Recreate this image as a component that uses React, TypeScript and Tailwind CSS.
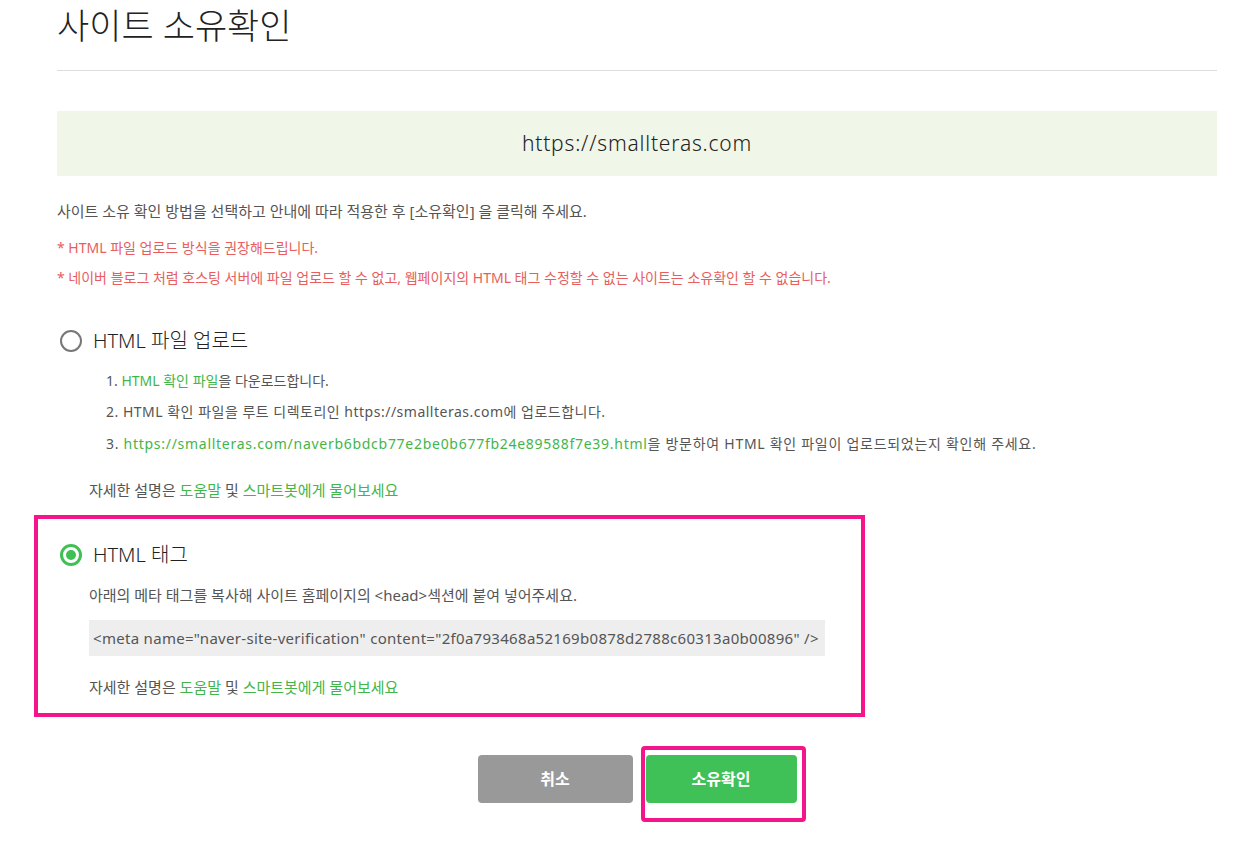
const font = { fontFamily: '"Noto Sans", "Noto Sans CJK KR", sans-serif' };

function Radio({ checked }: { checked?: boolean }) {
  return checked ? (
    <span className="flex h-[22px] w-[22px] items-center justify-center rounded-full border-[3px] border-[#3fc055]">
      <span className="h-[10px] w-[10px] rounded-full bg-[#3fc055]" />
    </span>
  ) : (
    <span className="h-[22px] w-[22px] rounded-full border-2 border-[#777]" />
  );
}

function Help() {
  return (
    <p className="text-[15px] leading-5 text-[#555]">
      자세한 설명은 <span className="text-[#43b549]">도움말</span> 및{" "}
      <span className="text-[#43b549]">스마트봇에게 물어보세요</span>
    </p>
  );
}

export default function App() {
  return (
    <div style={font} className="min-h-[841px] bg-white">
      <div className="mx-[57px] w-[1160px]">
        <h1 className="border-b border-[#ddd] pt-[6px] pb-6 text-[35px] leading-10 font-light text-[#222]">
          사이트 소유확인
        </h1>

        <div className="mt-10 flex h-[65px] items-center justify-center bg-[#f0f6e8] text-[21px] font-light tracking-[0.8px] text-[#222]">
          https://smallteras.com
        </div>

        <p className="mt-[25px] text-[15px] leading-5 text-[#555]">
          사이트 소유 확인 방법을 선택하고 안내에 따라 적용한 후 [소유확인] 을 클릭해 주세요.
        </p>
        <p className="mt-[17px] text-[14px] leading-5 text-[#e85d5d]">* HTML 파일 업로드 방식을 권장해드립니다.</p>
        <p className="mt-[10px] text-[14px] leading-5 text-[#e85d5d]">
          * 네이버 블로그 처럼 호스팅 서버에 파일 업로드 할 수 없고, 웹페이지의 HTML 태그 수정할 수 없는 사이트는 소유확인 할 수 없습니다.
        </p>

        <section className="mt-[41px]">
          <label className="flex h-6 items-center gap-[11px] pl-[3px] text-[20px] font-light text-[#222]">
            <Radio />
            HTML 파일 업로드
          </label>
          <ol className="mt-[18px] pl-[49px] text-[14px] leading-5 text-[#555]">
            <li>
              1. <span className="text-[#43b549]">HTML 확인 파일</span>을 다운로드합니다.
            </li>
            <li className="mt-[11px] tracking-[0.5px]">
              2. HTML 확인 파일을 루트 디렉토리인 https://smallteras.com에 업로드합니다.
            </li>
            <li className="mt-3 tracking-[0.72px]">
              3.{" "}
              <span className="text-[#43b549]">https://smallteras.com/naverb6bdcb77e2be0b677fb24e89588f7e39.html</span>을 방문하여 HTML
              확인 파일이 업로드되었는지 확인해 주세요.
            </li>
          </ol>
          <div className="mt-[26px] pl-8">
            <Help />
          </div>
        </section>

        <section className="mt-[15px] -ml-[23px] w-[831px] border-4 border-[#f5148a] pt-6 pb-4 pl-[22px]">
          <label className="flex h-6 items-center gap-[11px] text-[20px] font-light text-[#222]">
            <Radio checked />
            HTML 태그
          </label>
          <div className="pl-[29px]">
            <p className="mt-[18px] text-[15px] leading-5 text-[#555]">
              아래의 메타 태그를 복사해 사이트 홈페이지의 &lt;head&gt;섹션에 붙여 넣어주세요.
            </p>
            <div className="mt-[15px] flex h-9 w-[736px] items-center bg-[#eee] px-1 text-[15px] tracking-[0.3px] whitespace-nowrap text-[#555]">
              &lt;meta name="naver-site-verification" content="2f0a793468a52169b0878d2788c60313a0b00896" /&gt;
            </div>
            <div className="mt-[21px]">
              <Help />
            </div>
          </div>
        </section>

        <div className="mt-[38px] flex justify-center gap-[13px]">
          <button className="h-12 w-[155px] rounded bg-[#999] text-[16px] font-bold text-white">취소</button>
          <span className="relative">
            <button className="h-12 w-[151px] rounded bg-[#40c157] text-[16px] font-bold text-white">소유확인</button>
            <span className="pointer-events-none absolute -top-[9px] -right-[9px] -bottom-[19px] -left-[5px] rounded-sm border-4 border-[#f5148a]" />
          </span>
        </div>
      </div>
    </div>
  );
}
